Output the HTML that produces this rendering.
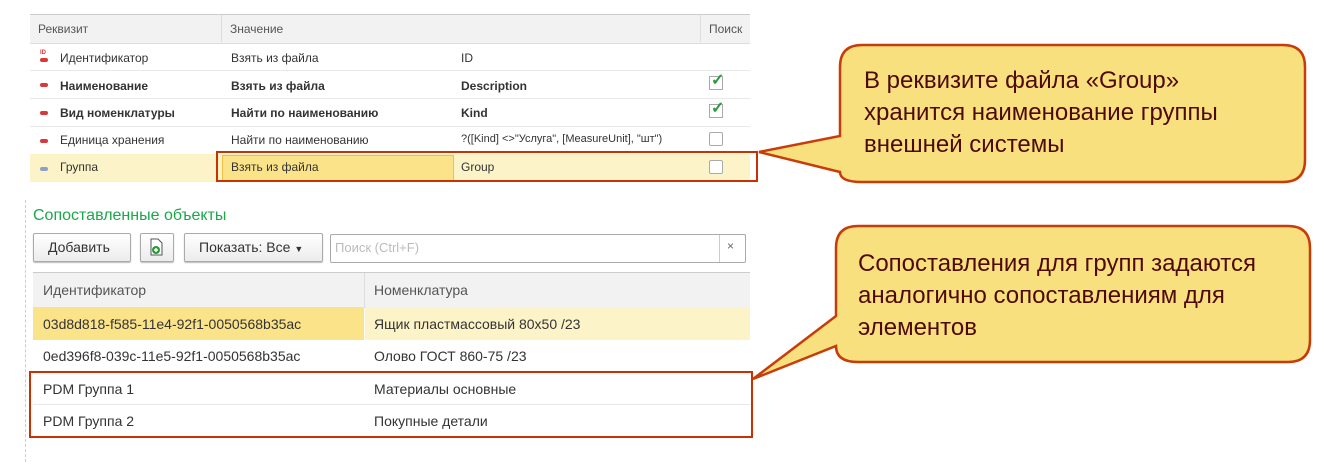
<!DOCTYPE html>
<html><head><meta charset="utf-8"><style>
body{margin:0;width:1326px;height:462px;background:#fff;position:relative;overflow:hidden;font-family:"Liberation Sans",sans-serif;color:#333}
.a{position:absolute;white-space:nowrap}
.t{font-size:12px}
.b{font-weight:bold}
.ic{position:absolute;width:8px;height:4px;border-radius:2px;background:#d83a3a}
</style></head><body>
<!-- top table -->
<div class="a" style="left:30px;top:14px;width:720px;height:28px;background:#f2f2f2;border-top:1px solid #ccc;border-bottom:1px solid #ddd"></div>
<div class="a" style="left:221px;top:15px;width:1px;height:27px;background:#ddd"></div>
<div class="a" style="left:700px;top:15px;width:1px;height:27px;background:#ddd"></div>
<div class="a t" style="left:38px;top:22px;color:#555">Реквизит</div>
<div class="a t" style="left:230px;top:22px;color:#555">Значение</div>
<div class="a t" style="left:709px;top:22px;color:#555">Поиск</div>
<div class="a" style="left:30px;top:70px;width:720px;height:1px;background:#e8e8e8"></div>
<div class="a" style="left:30px;top:98px;width:720px;height:1px;background:#e8e8e8"></div>
<div class="a" style="left:30px;top:126px;width:720px;height:1px;background:#e8e8e8"></div>
<div class="a" style="left:30px;top:154px;width:720px;height:28px;background:#fdf3c8"></div>
<div class="a" style="left:222px;top:155px;width:230px;height:24px;background:#fbe38a;border:1px solid #f0c040"></div>

<div class="a" style="left:40px;top:50px;font-size:6px;color:#d83a3a;font-weight:bold;line-height:6px">ID</div>
<div class="ic" style="left:40px;top:58px"></div>
<div class="ic" style="left:40px;top:83px"></div>
<div class="ic" style="left:40px;top:111px"></div>
<div class="ic" style="left:40px;top:139px"></div>
<div class="ic" style="left:40px;top:167px;background:#8fa0c8"></div>

<div class="a t" style="left:60px;top:51px">Идентификатор</div>
<div class="a t" style="left:231px;top:51px">Взять из файла</div>
<div class="a t" style="left:461px;top:51px">ID</div>
<div class="a t b" style="left:60px;top:79px">Наименование</div>
<div class="a t b" style="left:231px;top:79px">Взять из файла</div>
<div class="a t b" style="left:461px;top:79px">Description</div>
<div class="a t b" style="left:60px;top:106px">Вид номенклатуры</div>
<div class="a t b" style="left:231px;top:106px">Найти по наименованию</div>
<div class="a t b" style="left:461px;top:106px">Kind</div>
<div class="a t" style="left:60px;top:133px">Единица хранения</div>
<div class="a t" style="left:231px;top:133px">Найти по наименованию</div>
<div class="a t" style="left:461px;top:133px;font-size:11px">?([Kind] &lt;&gt;"Услуга", [MeasureUnit], "шт")</div>
<div class="a t" style="left:60px;top:160px">Группа</div>
<div class="a t" style="left:231px;top:160px">Взять из файла</div>
<div class="a t" style="left:461px;top:160px">Group</div>
<!-- checkboxes -->
<div class="a" style="left:709px;top:76px;width:12px;height:12px;border:1px solid #aaa;background:#fff"></div>
<div class="a" style="left:711px;top:70px;color:#2a9a3a;font-size:16px;font-weight:bold">✓</div>
<div class="a" style="left:709px;top:104px;width:12px;height:12px;border:1px solid #aaa;background:#fff"></div>
<div class="a" style="left:711px;top:98px;color:#2a9a3a;font-size:16px;font-weight:bold">✓</div>
<div class="a" style="left:709px;top:132px;width:12px;height:12px;border:1px solid #aaa;background:#fff;border-radius:2px"></div>
<div class="a" style="left:709px;top:160px;width:12px;height:12px;border:1px solid #aaa;background:#fff;border-radius:2px"></div>
<div class="a" style="left:216px;top:151px;width:538px;height:27px;border:2px solid #c83200"></div>

<!-- bottom -->
<div class="a" style="left:25px;top:200px;height:262px;border-left:1px dashed #ccc"></div>
<div class="a" style="left:33px;top:207px;font-size:16px;color:#1aa84a">Сопоставленные объекты</div>
<div class="a" style="left:33px;top:233px;width:96px;height:27px;border:1px solid #aaa;border-radius:2px;background:linear-gradient(#fff,#ececec);box-shadow:0 1px 1px #bbb"></div>
<div class="a" style="left:48px;top:239px;font-size:14px">Добавить</div>
<div class="a" style="left:140px;top:233px;width:32px;height:27px;border:1px solid #aaa;border-radius:2px;background:linear-gradient(#fff,#ececec);box-shadow:0 1px 1px #bbb"></div>
<svg class="a" style="left:148px;top:237px" width="16" height="20"><path d="M3 2h7l4 4v12H3z" fill="#fff" stroke="#555"/><circle cx="8" cy="13" r="4" fill="#2a9a3a"/><path d="M6 13h4M8 11v4" stroke="#fff" stroke-width="1.5"/></svg>
<div class="a" style="left:184px;top:233px;width:137px;height:27px;border:1px solid #aaa;border-radius:2px;background:linear-gradient(#fff,#ececec);box-shadow:0 1px 1px #bbb"></div>
<div class="a" style="left:199px;top:239px;font-size:14px">Показать: Все <span style="font-size:9px">▼</span></div>
<div class="a" style="left:330px;top:234px;width:414px;height:27px;border:1px solid #aaa;border-radius:2px;background:#fff"></div>
<div class="a" style="left:719px;top:235px;width:1px;height:27px;background:#ccc"></div>
<div class="a" style="left:335px;top:240px;font-size:13px;color:#bbb">Поиск (Ctrl+F)</div>
<div class="a" style="left:727px;top:239px;font-size:12px;color:#666">×</div>

<div class="a" style="left:33px;top:272px;width:717px;height:34px;background:#f2f2f2;border-top:1px solid #ccc;border-bottom:1px solid #ddd"></div>
<div class="a" style="left:364px;top:273px;width:1px;height:34px;background:#ddd"></div>
<div class="a" style="left:43px;top:282px;font-size:14px;color:#555">Идентификатор</div>
<div class="a" style="left:374px;top:282px;font-size:14px;color:#555">Номенклатура</div>
<div class="a" style="left:33px;top:307px;width:331px;height:33px;background:#fbe38a"></div>
<div class="a" style="left:365px;top:307px;width:385px;height:33px;background:#fdf3c8"></div>
<div class="a" style="left:33px;top:404px;width:717px;height:1px;background:#e8e8e8"></div>
<div class="a" style="left:43px;top:316px;font-size:14px">03d8d818-f585-11e4-92f1-0050568b35ac</div>
<div class="a" style="left:374px;top:316px;font-size:14px">Ящик пластмассовый 80x50 /23</div>
<div class="a" style="left:43px;top:348px;font-size:14px">0ed396f8-039c-11e5-92f1-0050568b35ac</div>
<div class="a" style="left:374px;top:348px;font-size:14px">Олово ГОСТ 860-75 /23</div>
<div class="a" style="left:43px;top:381px;font-size:14px">PDM Группа 1</div>
<div class="a" style="left:374px;top:381px;font-size:14px">Материалы основные</div>
<div class="a" style="left:43px;top:413px;font-size:14px">PDM Группа 2</div>
<div class="a" style="left:374px;top:413px;font-size:14px">Покупные детали</div>
<div class="a" style="left:29px;top:371px;width:720px;height:63px;border:2px solid #c83200"></div>

<!-- callouts -->
<svg class="a" style="left:0;top:0" width="1326" height="462">
<path d="M862 45H1283Q1305 45 1305 67V160Q1305 182 1283 182H862Q840 182 840 172L759 152L840 136V67Q840 45 862 45Z" fill="#f8e07f" stroke="#c83c0a" stroke-width="2.5"/>
<path d="M858 226H1288Q1310 226 1310 248V340Q1310 362 1288 362H858Q836 362 836 346L753 379L836 316V248Q836 226 858 226Z" fill="#f8e07f" stroke="#c83c0a" stroke-width="2.5"/>
<g font-family="Liberation Sans, sans-serif" font-size="24" fill="#4e0a0a">
<text x="864" y="88">В реквизите файла «Group»</text>
<text x="864" y="120">хранится наименование группы</text>
<text x="864" y="152">внешней системы</text>
<text x="858" y="271">Сопоставления для групп задаются</text>
<text x="858" y="303">аналогично сопоставлениям для</text>
<text x="858" y="335">элементов</text>
</g>
</svg>
</body></html>
